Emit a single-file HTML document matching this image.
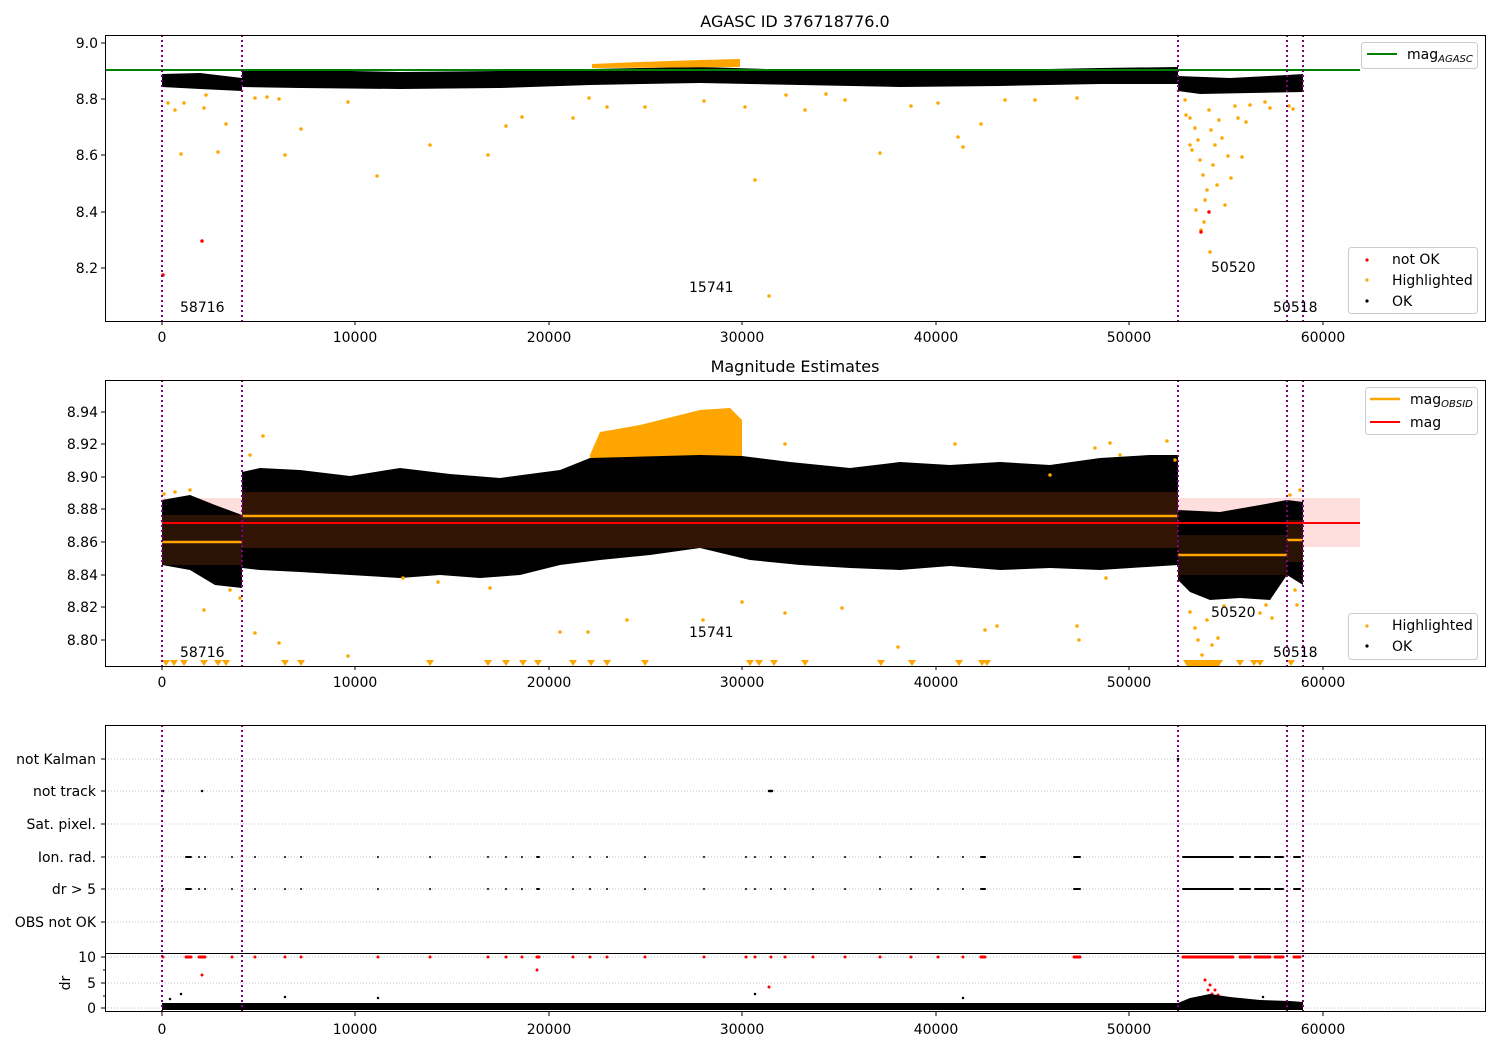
<!DOCTYPE html>
<html><head><meta charset="utf-8"><style>
html,body{margin:0;padding:0;background:#fff;}
svg{display:block;font-family:"DejaVu Sans","Liberation Sans",sans-serif;}
text{font-size:14px;fill:#000;}
.d{fill:none;stroke-linecap:round;}
</style></head><body>
<svg width="1500" height="1050" viewBox="0 0 1500 1050" xmlns="http://www.w3.org/2000/svg">
<rect width="1500" height="1050" fill="#fff"/>

<!-- ============ AXES 1 ============ -->
<text x="795" y="27" text-anchor="middle" style="font-size:16px">AGASC ID 376718776.0</text>
<g>
<path d="M162,74 L200,73 L242,78 L242,91 L200,89 L162,87Z" fill="#000"/>
<path d="M242,69 L300,70 L400,72 L500,71 L590,69 L700,67 L800,70 L900,71 L1000,70 L1100,68 L1178,67 L1178,84 L1100,84 L1000,86 L900,87 L800,85 L700,83 L590,85 L500,88 L400,89 L300,88 L242,87Z" fill="#000"/>
<path d="M1178,76 L1230,78 L1287,75 L1303,74 L1303,92 L1250,93 L1200,94 L1178,91Z" fill="#000"/>
<path d="M592,64 L640,62 L700,60 L740,59 L740,67 L592,68Z" fill="#ffa500"/>
<line x1="105" y1="70" x2="1360" y2="70" stroke="#008000" stroke-width="2"/>
<path class="d" stroke="#ffa500" stroke-width="3.5" d="M168,103h0M175,110h0M181,154h0M184,103h0M204,108h0M206,95h0M218,152h0M226,124h0M255,98h0M267,97h0M285,155h0M301,129h0M279,99h0M348,102h0M377,176h0M430,145h0M488,155h0M506,126h0M522,117h0M573,118h0M589,98h0M607,107h0M645,107h0M704,101h0M745,107h0M755,180h0M769,296h0M786,95h0M805,110h0M826,94h0M845,100h0M880,153h0M911,106h0M938,103h0M963,147h0M981,124h0M958,137h0M1005,100h0M1035,100h0M1077,98h0M1185,100h0M1190,118h0M1192,150h0M1195,128h0M1198,140h0M1200,160h0M1203,175h0M1205,200h0M1207,190h0M1209,110h0M1211,130h0M1213,165h0M1215,145h0M1217,185h0M1219,120h0M1222,138h0M1225,205h0M1228,156h0M1231,178h0M1235,106h0M1238,118h0M1242,157h0M1246,122h0M1250,105h0M1265,102h0M1270,108h0M1289,106h0M1293,109h0M1210,252h0M1201,230h0M1204,222h0M1196,210h0M1190,145h0M1186,115h0"/>
<path class="d" stroke="#ff0000" stroke-width="3.5" d="M163,275h0M202,241h0M1209,212h0M1201,232h0"/>
<g stroke="#800080" stroke-width="2" stroke-dasharray="2,3"><line x1="162" y1="35" x2="162" y2="321"/><line x1="242" y1="35" x2="242" y2="321"/><line x1="1178" y1="35" x2="1178" y2="321"/><line x1="1287" y1="35" x2="1287" y2="321"/><line x1="1303" y1="35" x2="1303" y2="321"/></g>
<text x="180" y="312">58716</text><text x="689" y="292">15741</text><text x="1211" y="272">50520</text><text x="1273" y="312">50518</text>
<rect x="105.5" y="35.5" width="1380" height="286" fill="none" stroke="#000"/>
<rect x="1361.5" y="42.5" width="116" height="26" rx="3" fill="#fff" stroke="#ccc"/>
<line x1="1367" y1="54" x2="1397" y2="54" stroke="#008000" stroke-width="2"/>
<text x="1407" y="59">mag<tspan style="font-size:10px;font-style:italic" dy="3">AGASC</tspan></text>
<rect x="1348.5" y="247.5" width="129" height="66" rx="3" fill="#fff" stroke="#ccc"/>
<circle cx="1367" cy="260" r="1.6" fill="#f00"/><text x="1392" y="264">not OK</text>
<circle cx="1367" cy="280" r="1.6" fill="#ffa500"/><text x="1392" y="285">Highlighted</text>
<circle cx="1367" cy="301" r="1.6" fill="#000"/><text x="1392" y="306">OK</text>
<g stroke="#000"><path d="M101,43h4M101,99h4M101,155h4M101,212h4M101,268h4M162,321v4M355,321v4M549,321v4M742,321v4M936,321v4M1129,321v4M1323,321v4"/></g>
<g text-anchor="end"><text x="98" y="48">9.0</text><text x="98" y="104">8.8</text><text x="98" y="160">8.6</text><text x="98" y="217">8.4</text><text x="98" y="273">8.2</text></g>
<g text-anchor="middle"><text x="162" y="342">0</text><text x="355" y="342">10000</text><text x="549" y="342">20000</text><text x="742" y="342">30000</text><text x="936" y="342">40000</text><text x="1129" y="342">50000</text><text x="1323" y="342">60000</text></g>
</g>

<!-- ============ AXES 2 ============ -->
<text x="795" y="372" text-anchor="middle" style="font-size:16px">Magnitude Estimates</text>
<g>
<rect x="162" y="498" width="1198" height="49" fill="#ffdede"/>
<path d="M590,455 L600,432 L640,425 L680,415 L700,410 L730,408 L742,420 L742,458 L590,460Z" fill="#ffa500"/>
<path d="M162,500 L190,495 L215,505 L242,515 L242,588 L215,585 L190,570 L162,565Z" fill="#000"/>
<path d="M242,472 L260,468 L300,470 L350,476 L400,468 L450,474 L500,478 L560,470 L590,458 L700,455 L742,456 L790,462 L850,468 L900,462 L950,465 L1000,462 L1050,465 L1100,458 L1150,455 L1178,455 L1178,565 L1100,570 L1050,568 L1000,570 L950,566 L900,570 L850,568 L800,565 L750,560 L700,548 L650,555 L600,560 L560,565 L520,575 L480,578 L440,575 L400,578 L350,575 L300,572 L260,570 L242,568Z" fill="#000"/>
<path d="M1178,510 L1220,512 L1260,505 L1287,500 L1303,502 L1303,585 L1287,575 L1270,600 L1240,598 L1210,600 L1190,592 L1178,580Z" fill="#000"/>
<rect x="242" y="492" width="936" height="56" fill="#331505"/>
<rect x="162" y="515" width="80" height="50" fill="#2a1205"/>
<rect x="1178" y="535" width="109" height="40" fill="#241005"/>
<rect x="1287" y="520" width="16" height="42" fill="#2a1205"/>
<line x1="162" y1="542" x2="242" y2="542" stroke="#ffa500" stroke-width="2.5"/>
<line x1="242" y1="516" x2="1178" y2="516" stroke="#ffa500" stroke-width="2.5"/>
<line x1="1178" y1="555" x2="1287" y2="555" stroke="#ffa500" stroke-width="2.5"/>
<line x1="1287" y1="540" x2="1303" y2="540" stroke="#ffa500" stroke-width="2.5"/>
<line x1="162" y1="523" x2="1360" y2="523" stroke="#f00" stroke-width="2"/>
<path class="d" stroke="#ffa500" stroke-width="3.5" d="M164,494h0M175,492h0M190,490h0M230,590h0M240,598h0M204,610h0M255,633h0M279,643h0M348,656h0M263,436h0M250,455h0M403,578h0M588,632h0M742,602h0M785,613h0M842,608h0M898,647h0M1106,578h0M1095,448h0M1110,443h0M955,444h0M785,444h0M1167,441h0M1190,612h0M1195,628h0M1198,640h0M1202,655h0M1207,620h0M1212,645h0M1218,638h0M1224,606h0M1260,613h0M1266,605h0M1272,618h0M1290,495h0M1300,490h0M1295,590h0M1297,605h0M1175,460h0M1120,455h0M1050,475h0M997,626h0M985,630h0M1077,626h0M1079,640h0M703,620h0M627,620h0M560,632h0M490,588h0M438,582h0"/>
<path d="M162,660h8l-4,6zM170,660h8l-4,6zM180,660h8l-4,6zM200,660h8l-4,6zM214,660h8l-4,6zM222,660h8l-4,6zM281,660h8l-4,6zM297,660h8l-4,6zM426,660h8l-4,6zM484,660h8l-4,6zM502,660h8l-4,6zM519,660h8l-4,6zM534,660h8l-4,6zM569,660h8l-4,6zM587,660h8l-4,6zM603,660h8l-4,6zM641,660h8l-4,6zM746,660h8l-4,6zM755,660h8l-4,6zM770,660h8l-4,6zM801,660h8l-4,6zM877,660h8l-4,6zM908,660h8l-4,6zM955,660h8l-4,6zM978,660h8l-4,6zM983,660h8l-4,6zM1183,660h40l-4,6h-32zM1236,660h8l-4,6zM1250,660h8l-4,6zM1256,660h8l-4,6zM1287,660h8l-4,6z" fill="#ffa500"/>
<g stroke="#800080" stroke-width="2" stroke-dasharray="2,3"><line x1="162" y1="380" x2="162" y2="666"/><line x1="242" y1="380" x2="242" y2="666"/><line x1="1178" y1="380" x2="1178" y2="666"/><line x1="1287" y1="380" x2="1287" y2="666"/><line x1="1303" y1="380" x2="1303" y2="666"/></g>
<text x="180" y="657">58716</text><text x="689" y="637">15741</text><text x="1211" y="617">50520</text><text x="1273" y="657">50518</text>
<rect x="105.5" y="380.5" width="1380" height="286" fill="none" stroke="#000"/>
<rect x="1365.5" y="387.5" width="112" height="47" rx="3" fill="#fff" stroke="#ccc"/>
<line x1="1370" y1="399" x2="1400" y2="399" stroke="#ffa500" stroke-width="2.5"/>
<text x="1410" y="404">mag<tspan style="font-size:10px;font-style:italic" dy="3">OBSID</tspan></text>
<line x1="1370" y1="422" x2="1400" y2="422" stroke="#f00" stroke-width="2"/>
<text x="1410" y="427">mag</text>
<rect x="1348.5" y="613.5" width="129" height="46" rx="3" fill="#fff" stroke="#ccc"/>
<circle cx="1367" cy="626" r="1.6" fill="#ffa500"/><text x="1392" y="630">Highlighted</text>
<circle cx="1367" cy="646" r="1.6" fill="#000"/><text x="1392" y="651">OK</text>
<g stroke="#000"><path d="M101,412h4M101,444h4M101,477h4M101,509h4M101,542h4M101,575h4M101,607h4M101,640h4M162,666v4M355,666v4M549,666v4M742,666v4M936,666v4M1129,666v4M1323,666v4"/></g>
<g text-anchor="end"><text x="98" y="417">8.94</text><text x="98" y="449">8.92</text><text x="98" y="482">8.90</text><text x="98" y="514">8.88</text><text x="98" y="547">8.86</text><text x="98" y="580">8.84</text><text x="98" y="612">8.82</text><text x="98" y="645">8.80</text></g>
<g text-anchor="middle"><text x="162" y="687">0</text><text x="355" y="687">10000</text><text x="549" y="687">20000</text><text x="742" y="687">30000</text><text x="936" y="687">40000</text><text x="1129" y="687">50000</text><text x="1323" y="687">60000</text></g>
</g>

<!-- ============ AXES 3 ============ -->
<g>
<g stroke="#b0b0b0" stroke-width="0.8" stroke-dasharray="1,2"><path d="M105,759h1380M105,791h1380M105,824h1380M105,857h1380M105,889h1380M105,922h1380M105,957h1380M105,983h1380M105,1008h1380"/></g>
<path class="d" stroke="#000" stroke-width="2.5" d="M163,791h0M202,791h0M769,791h3M1178,759h0"/>
<path class="d" stroke="#000" stroke-width="2" d="M163,889h0M186,857h5M199,857h0M205,857h0M232,857h0M255,857h0M285,857h0M301,857h0M378,857h0M430,857h0M488,857h0M506,857h0M522,857h0M537,857h2M573,857h0M590,857h0M607,857h0M645,857h0M704,857h0M746,857h0M755,857h0M771,857h0M785,857h0M813,857h0M845,857h0M880,857h0M911,857h0M938,857h0M963,857h0M981,857h4M1074,857h6M1183,857h50M1240,857h10M1255,857h15M1275,857h8M1294,857h6M186,889h5M199,889h0M205,889h0M232,889h0M255,889h0M285,889h0M301,889h0M378,889h0M430,889h0M488,889h0M506,889h0M522,889h0M537,889h2M573,889h0M590,889h0M607,889h0M645,889h0M704,889h0M746,889h0M755,889h0M771,889h0M785,889h0M813,889h0M845,889h0M880,889h0M911,889h0M938,889h0M963,889h0M981,889h4M1074,889h6M1183,889h50M1240,889h10M1255,889h15M1275,889h8M1294,889h6"/>
<line x1="105" y1="953.5" x2="1485" y2="953.5" stroke="#000"/>
<path class="d" stroke="#f00" stroke-width="3" d="M163,957h0M186,957h5M199,957h6M232,957h0M255,957h0M285,957h0M301,957h0M378,957h0M430,957h0M488,957h0M506,957h0M522,957h0M537,957h2M573,957h0M590,957h0M607,957h0M645,957h0M704,957h0M746,957h0M755,957h0M771,957h0M785,957h0M813,957h0M845,957h0M880,957h0M911,957h0M938,957h0M963,957h0M981,957h4M1074,957h6M1183,957h50M1240,957h10M1255,957h15M1275,957h8M1294,957h6M202,975h0M537,970h0M769,987h0M1205,980h0M1210,985h0M1215,990h0M1212,994h0M1208,990h0M1218,995h0"/>
<rect x="162" y="1003" width="1141" height="7" fill="#000"/>
<path d="M1178,1003 L1190,998 L1210,994 L1230,997 L1260,1000 L1290,1001 L1303,1002 L1303,1005 L1178,1005Z" fill="#000"/>
<path class="d" stroke="#000" stroke-width="2.5" d="M181,994h0M170,999h0M285,997h0M378,998h0M755,994h0M963,998h0M1263,997h0"/>
<g stroke="#800080" stroke-width="2" stroke-dasharray="2,3"><line x1="162" y1="725" x2="162" y2="1012"/><line x1="242" y1="725" x2="242" y2="1012"/><line x1="1178" y1="725" x2="1178" y2="1012"/><line x1="1287" y1="725" x2="1287" y2="1012"/><line x1="1303" y1="725" x2="1303" y2="1012"/></g>
<rect x="105.5" y="725.5" width="1380" height="286" fill="none" stroke="#000"/>
<g stroke="#000"><path d="M101,759h4M101,791h4M101,824h4M101,857h4M101,889h4M101,922h4M101,957h4M101,983h4M101,1008h4M103,970h2M103,996h2M162,1012v4M355,1012v4M549,1012v4M742,1012v4M936,1012v4M1129,1012v4M1323,1012v4"/></g>
<g text-anchor="end"><text x="96" y="764">not Kalman</text><text x="96" y="796">not track</text><text x="96" y="829">Sat. pixel.</text><text x="96" y="862">Ion. rad.</text><text x="96" y="894">dr &gt; 5</text><text x="96" y="927">OBS not OK</text><text x="96" y="962">10</text><text x="96" y="988">5</text><text x="96" y="1013">0</text></g>
<text x="0" y="0" transform="translate(70,983) rotate(-90)" text-anchor="middle">dr</text>
<g text-anchor="middle"><text x="162" y="1034">0</text><text x="355" y="1034">10000</text><text x="549" y="1034">20000</text><text x="742" y="1034">30000</text><text x="936" y="1034">40000</text><text x="1129" y="1034">50000</text><text x="1323" y="1034">60000</text></g>
</g>
</svg>
</body></html>
